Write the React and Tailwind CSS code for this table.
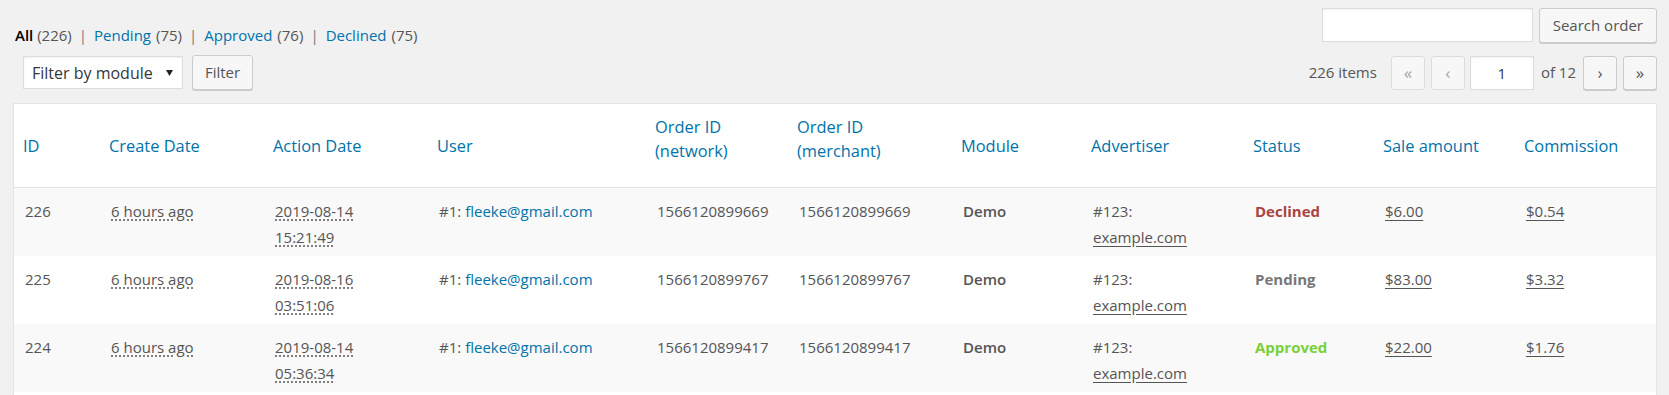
import React from 'react';

const cols =
  'grid grid-cols-[86px_164px_164px_218px_142px_164px_130px_162px_130px_141px_141px]';

const orders = [
  {
    id: 226,
    date: '2019-08-14',
    time: '15:21:49',
    orderId: '1566120899669',
    status: 'Declined',
    sale: '$6.00',
    commission: '$0.54',
  },
  {
    id: 225,
    date: '2019-08-16',
    time: '03:51:06',
    orderId: '1566120899767',
    status: 'Pending',
    sale: '$83.00',
    commission: '$3.32',
  },
  {
    id: 224,
    date: '2019-08-14',
    time: '05:36:34',
    orderId: '1566120899417',
    status: 'Approved',
    sale: '$22.00',
    commission: '$1.76',
  },
];

const statusColor = {
  Declined: 'text-[#a94442]',
  Pending: 'text-[#777]',
  Approved: 'text-[#7ad03a]',
};

const StatusTabs = () => {
  const tabs = [
    { label: 'Pending', count: 75 },
    { label: 'Approved', count: 76 },
    { label: 'Declined', count: 75 },
  ];
  return (
    <ul className="flex items-center text-[15px] leading-[24px] text-[#555]">
      <li>
        <span className="font-semibold text-black">All</span> (226)
      </li>
      {tabs.map((tab) => (
        <li key={tab.label} className="flex items-center">
          <span className="mx-[7px] text-[#777]">|</span>
          <a href="#" className="text-[#0073aa]">
            {tab.label}
          </a>
          <span className="ml-[5px]">({tab.count})</span>
        </li>
      ))}
    </ul>
  );
};

const PageButton = ({ children, disabled }) => (
  <span
    className={`flex h-[34px] w-[34px] items-center justify-center rounded-[3px] border text-[17px] ${
      disabled
        ? 'border-[#ddd] bg-[#f7f7f7] text-[#a0a5aa]'
        : 'border-[#ccc] bg-[#f7f7f7] text-[#555] shadow-[0_1px_0_#ccc]'
    }`}
  >
    {children}
  </span>
);

const HeaderCell = ({ children, twoLine }) => (
  <div
    className={`pl-[9px] pr-2 text-[16.4px] leading-[24px] text-[#0073aa] ${
      twoLine ? 'pt-[11px]' : 'pt-[30px]'
    }`}
  >
    {children}
  </div>
);

const Cell = ({ children, className = '' }) => (
  <div className={`pl-[11px] pr-2 pt-[10px] pb-[6px] ${className}`}>{children}</div>
);

export default function App() {
  return (
    <div
      className="h-[395px] overflow-hidden bg-[#f1f1f1] pl-[13px] pr-[12px] text-[#555]"
      style={{ fontFamily: '"Open Sans", "Noto Sans", sans-serif' }}
    >
      {/* Status tabs + search */}
      <div className="flex items-start justify-between pt-[8px]">
        <div className="mt-[15px] pl-[2px]">
          <StatusTabs />
        </div>
        <div className="flex gap-[6px]">
          <input
            type="text"
            className="h-[34px] w-[211px] border border-[#ddd] bg-white shadow-[inset_0_1px_2px_rgba(0,0,0,0.07)] outline-none"
          />
          <button className="h-[35px] rounded-[3px] border border-[#ccc] bg-[#f7f7f7] px-[13px] text-[15px] text-[#555] shadow-[0_1px_0_#ccc]">
            Search order
          </button>
        </div>
      </div>

      {/* Tablenav */}
      <div className="mt-[8px] flex items-center justify-between">
        <div className="flex items-center gap-[9px] pl-[10px]">
          <div className="flex h-[33px] w-[160px] items-center justify-between border border-[#ddd] bg-white pl-[8px] pr-[9px] text-[16px] text-[#32373c] shadow-[inset_0_1px_2px_rgba(0,0,0,0.07)]">
            <span>Filter by module</span>
            <svg width="7" height="6" viewBox="0 0 7 6">
              <polygon points="0,0 7,0 3.5,6" fill="#222" />
            </svg>
          </div>
          <button className="h-[35px] w-[61px] rounded-[3px] border border-[#ccc] bg-[#f7f7f7] text-[15px] text-[#555] shadow-[0_1px_0_#ccc]">
            Filter
          </button>
        </div>
        <div className="flex items-center text-[15px] text-[#555]">
          <span className="mr-[14px]">226 items</span>
          <div className="flex items-center gap-[6px]">
            <PageButton disabled>«</PageButton>
            <PageButton disabled>‹</PageButton>
          </div>
          <input
            type="text"
            defaultValue="1"
            className="ml-[5px] h-[34px] w-[64px] border border-[#ddd] bg-white text-center text-[15px] text-[#32373c] shadow-[inset_0_1px_2px_rgba(0,0,0,0.07)] outline-none"
          />
          <span className="mx-[7px]">of 12</span>
          <div className="flex items-center gap-[6px]">
            <PageButton>›</PageButton>
            <PageButton>»</PageButton>
          </div>
        </div>
      </div>

      {/* Table */}
      <div className="mt-[13px] border border-[#e5e5e5] bg-white shadow-[0_1px_1px_rgba(0,0,0,0.04)]">
        <div className={`${cols} h-[84px] border-b border-[#e1e1e1]`}>
          <HeaderCell>ID</HeaderCell>
          <HeaderCell>Create Date</HeaderCell>
          <HeaderCell>Action Date</HeaderCell>
          <HeaderCell>User</HeaderCell>
          <HeaderCell twoLine>
            Order ID
            <br />
            (network)
          </HeaderCell>
          <HeaderCell twoLine>
            Order ID
            <br />
            (merchant)
          </HeaderCell>
          <HeaderCell>Module</HeaderCell>
          <HeaderCell>Advertiser</HeaderCell>
          <HeaderCell>Status</HeaderCell>
          <HeaderCell>Sale amount</HeaderCell>
          <HeaderCell>Commission</HeaderCell>
        </div>

        {orders.map((order, i) => (
          <div
            key={order.id}
            className={`${cols} h-[68px] text-[15px] leading-[26px] ${
              i % 2 === 0 ? 'bg-[#f9f9f9]' : 'bg-white'
            }`}
          >
            <Cell>{order.id}</Cell>
            <Cell>
              <abbr className="underline decoration-dotted underline-offset-[3px]">
                6 hours ago
              </abbr>
            </Cell>
            <Cell>
              <abbr className="underline decoration-dotted underline-offset-[3px]">
                {order.date}
                <br />
                {order.time}
              </abbr>
            </Cell>
            <Cell>
              #1:{' '}
              <a href="#" className="text-[#0073aa]">
                fleeke@gmail.com
              </a>
            </Cell>
            <Cell>{order.orderId}</Cell>
            <Cell>{order.orderId}</Cell>
            <Cell className="font-semibold">Demo</Cell>
            <Cell>
              #123:
              <br />
              <a href="#" className="underline underline-offset-[3px]">
                example.com
              </a>
            </Cell>
            <Cell className={`font-bold ${statusColor[order.status]}`}>{order.status}</Cell>
            <Cell>
              <span className="underline underline-offset-[3px]">{order.sale}</span>
            </Cell>
            <Cell>
              <span className="underline underline-offset-[3px]">{order.commission}</span>
            </Cell>
          </div>
        ))}
        <div className="h-[20px] bg-white" />
      </div>
    </div>
  );
}
